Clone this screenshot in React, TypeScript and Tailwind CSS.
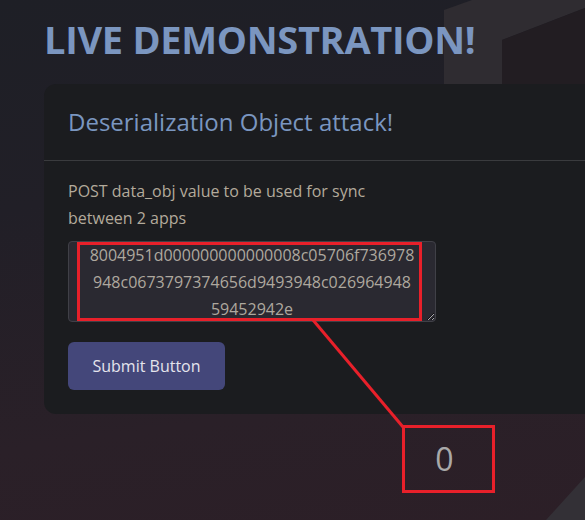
import React from "react";

const hex = "8004951d000000000000008c05706f736978\n948c0673797374656d9493948c026964948\n59452942e";

export default function App() {
  return (
    <div className="relative w-[585px] h-[520px] overflow-hidden bg-[linear-gradient(172deg,#1e1f26_0%,#211f27_35%,#2a2028_75%,#2c1f27_100%)] font-['Open_Sans',sans-serif]">
      {/* background decoration */}
      <svg className="absolute left-0 top-0" width="585" height="520" viewBox="0 0 585 520">
        <polygon points="444,10 472,0 585,0 585,8 502,40 502,90 444,90" fill="#2f2c31" />
        <polygon points="502,40 585,8 585,90 502,90" fill="#221d22" />
        <polygon points="585,477 585,520 546,520" fill="#333036" />
      </svg>

      <div className="relative pl-[44px]">
        <h1 className="mt-[15px] text-[38px] leading-[49px] font-bold text-[#7b96c0] tracking-[-0.3px]">
          LIVE DEMONSTRATION!
        </h1>
        <div className="mt-[20px] w-[560px] rounded-xl bg-[#1b1c1f]">
          <div className="px-6 py-[22px] text-[24px] leading-[32px] text-[#7a96c0] border-b border-[#3a3b3e]">
            Deserialization Object attack!
          </div>
          <div className="px-6 pt-[17px] pb-[24px]">
            <div className="w-[368px]">
              <p className="text-[16px] leading-[27px] text-[#b3aa9b]">
                POST data_obj value to be used for sync
                <br />
                between 2 apps
              </p>
              <div className="relative mt-[9px]">
                <textarea
                  readOnly
                  value={hex}
                  className="block w-[368px] h-[81px] p-0 overflow-hidden text-center text-[16px] leading-[27px] text-[#aea89f] bg-[#2a2931] border border-[#404047] rounded-[4px] outline-none font-['Open_Sans',sans-serif]"
                />
                <div className="absolute left-[9px] top-[1px] w-[345px] h-[79px] border-[3px] border-[#e8202a] pointer-events-none" />
              </div>
              <button className="mt-[20px] w-[157px] h-[48px] rounded-md bg-[#44477a] text-[16px] text-[#e4e4ec]">
                Submit Button
              </button>
            </div>
          </div>
        </div>
      </div>

      {/* annotation overlay */}
      <svg className="absolute left-0 top-0 pointer-events-none" width="585" height="520" viewBox="0 0 585 520">
        <line x1="313" y1="320" x2="403" y2="427" stroke="#e8202a" strokeWidth="3" />
        <rect x="403.5" y="426.5" width="90" height="65" fill="none" stroke="#e8202a" strokeWidth="3" />
      </svg>
      <div className="absolute left-[401px] top-[428px] w-[87px] h-[62px] flex items-center justify-center text-[32px] text-[#a9a9a9]">
        0
      </div>
    </div>
  );
}
